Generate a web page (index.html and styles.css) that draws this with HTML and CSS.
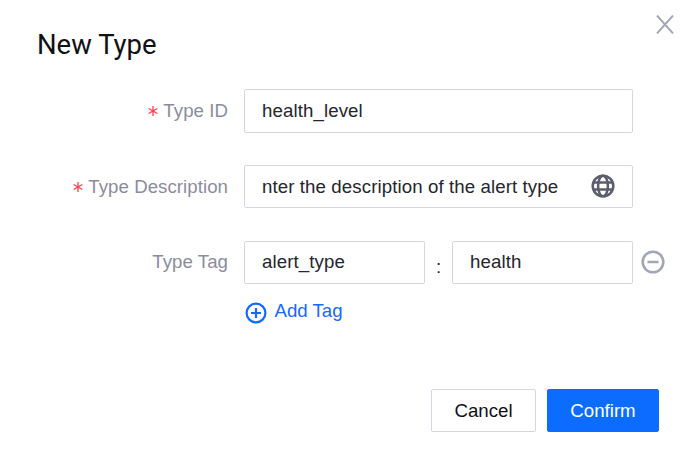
FILE: index.html
```html
<!DOCTYPE html>
<html lang="en">
<head>
<meta charset="utf-8">
<title>New Type</title>
<link rel="stylesheet" href="styles.css">
</head>
<body>
<main class="dialog">
  <header class="header">
    <h1 class="title">New Type</h1>
    <button class="close" aria-label="Close"><svg width="18" height="19" viewBox="0 0 18 19"><path d="M1 .5 17 18.500M17 .5 1 18.500" fill="none" stroke="#a3a6b6" stroke-width="1.900"/></svg></button>
  </header>
  <form class="form">
    <div class="row row-id">
      <label class="label"><svg class="star" width="10" height="10" viewBox="0 0 10 10"><path d="M5 0V10M.6 2.500 9.400 7.500M.6 7.500 9.400 2.500"/></svg>Type ID</label>
      <div class="field">health_level</div>
    </div>
    <div class="row">
      <label class="label"><svg class="star" width="10" height="10" viewBox="0 0 10 10"><path d="M5 0V10M.6 2.500 9.400 7.500M.6 7.500 9.400 2.500"/></svg>Type Description</label>
      <div class="field"><span>nter the description of the alert type</span>
        <svg class="globe" width="24" height="24" viewBox="0 0 24 24"><g fill="none" stroke="#5c5e6e" stroke-width="2.500"><circle cx="12" cy="12" r="10.300"/><ellipse cx="12" cy="12" rx="4.900" ry="10.300"/><path d="M2.500 8.500H21.500M2.500 15.500H21.500"/></g></svg>
      </div>
    </div>
    <div class="row row-tag">
      <label class="label">Type Tag</label>
      <div class="field half">alert_type</div>
      <span class="colon">:</span>
      <div class="field half">health</div>
      <svg class="remove" width="24" height="24" viewBox="0 0 24 24"><g fill="none" stroke="#a3a6b6" stroke-width="2.500"><circle cx="12" cy="12" r="10.300"/><path d="M6.500 12H17.500"/></g></svg>
    </div>
    <a class="add"><svg width="22" height="22" viewBox="0 0 22 22"><g fill="none" stroke="#1769ff" stroke-width="2.200"><circle cx="11" cy="11" r="9.400"/><path d="M6 11H16M11 6V16"/></g></svg><span>Add Tag</span></a>
  </form>
  <footer class="footer">
    <button class="btn">Cancel</button>
    <button class="btn primary">Confirm</button>
  </footer>
</main>
</body>
</html>
```
FILE: styles.css
```css
* { box-sizing: border-box; }
body {
  margin: 0;
  background: #fff;
  color: #25262e;
  font: 18.67px/22px "Liberation Sans", Arial, sans-serif;
}
.dialog {
  width: 691px;
  height: 455px;
  display: flex;
  flex-direction: column;
}
.header {
  height: 89px;
  display: flex;
  justify-content: space-between;
  align-items: flex-start;
  padding: 15px 17px 0 37px;
}
.title {
  margin: 14px 0 0;
  font: 400 27.5px/32px Roboto, sans-serif;
  color: #101116;
}
.close {
  border: 0;
  padding: 0;
  background: none;
  display: flex;
}
.form { height: 300px; }
.row {
  display: flex;
  height: 43px;
  margin-bottom: 33px;
}
.row-id { height: 44px; margin-bottom: 32px; }
.label {
  width: 228px;
  margin-right: 16px;
  height: 43px;
  display: flex;
  align-items: center;
  justify-content: flex-end;
  letter-spacing: .05px;
  color: #8b8d9d;
}
.star { margin: 1px 5px 0 0; fill: none; stroke: #f5434f; stroke-width: 1.3; }
.field {
  width: 389px;
  border: 1px solid #d6d6e0;
  border-radius: 2px;
  padding: 0 17px;
  display: flex;
  align-items: center;
  justify-content: space-between;
  white-space: nowrap;
  letter-spacing: .1px;
}
.half { width: 181px; }
.row-tag .label, .row-tag .field { padding-bottom: 2px; }
.globe { margin-top: -1px; }
.colon { width: 27px; padding-top: 15px; text-align: center; }
.remove { margin: 9px 0 0 8px; }
.add {
  display: flex;
  margin: -17px 0 0 244.5px;
  gap: 8px;
  color: #1769ff;
}
.add svg { margin-top: 2px; }
.footer {
  display: flex;
  justify-content: flex-end;
  gap: 11px;
  padding-right: 32px;
}
.btn {
  width: 105px;
  height: 43px;
  padding: 0;
  border: 1px solid #d6d6e0;
  border-radius: 2px;
  background: #fff;
  color: #101116;
  font: inherit;
}
.primary {
  width: 112px;
  border-color: #0b6cff;
  background: #0b6cff;
  color: #fff;
}
```
